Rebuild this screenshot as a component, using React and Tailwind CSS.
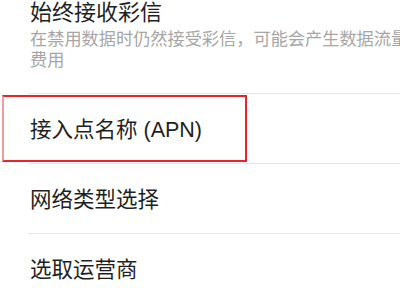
import React from "react";

// Simple settings row
const Row = ({ label, divider = true }) => (
  <div>
    <div className="h-[69px] pl-[30px] pt-[22px]">
      <span className="text-[21.5px] leading-[28px] text-[#1f1f1f]">{label}</span>
    </div>
    {divider && <div className="ml-[28px] h-px bg-[#e6e6e6]"></div>}
  </div>
);

const App = () => {
  return (
    <div
      className="relative w-[400px] h-[300px] overflow-hidden bg-white"
      style={{ fontFamily: '"Liberation Sans", "Noto Sans CJK SC", sans-serif' }}
    >
      <div className="h-[93px] pl-[30px]">
        <div className="text-[22px] leading-[26px] text-[#1f1f1f] whitespace-nowrap">始终接收彩信</div>
        <div className="mt-[3px] w-[395px] text-[17.2px] leading-[21px] text-[#a6a6a6]">
          在禁用数据时仍然接受彩信，可能会产生数据流量费用
        </div>
      </div>
      <div className="ml-[28px] h-px bg-[#e6e6e6]"></div>
      <Row label="接入点名称 (APN)" />
      <Row label="网络类型选择" />
      <Row label="选取运营商" divider={false} />

      {/* red annotation box */}
      <div className="absolute left-[2px] top-[95px] w-[245px] h-[67px] border-[2px] border-[#e8232b] border-l-[#f39a9d]"></div>
    </div>
  );
};

export default App;
